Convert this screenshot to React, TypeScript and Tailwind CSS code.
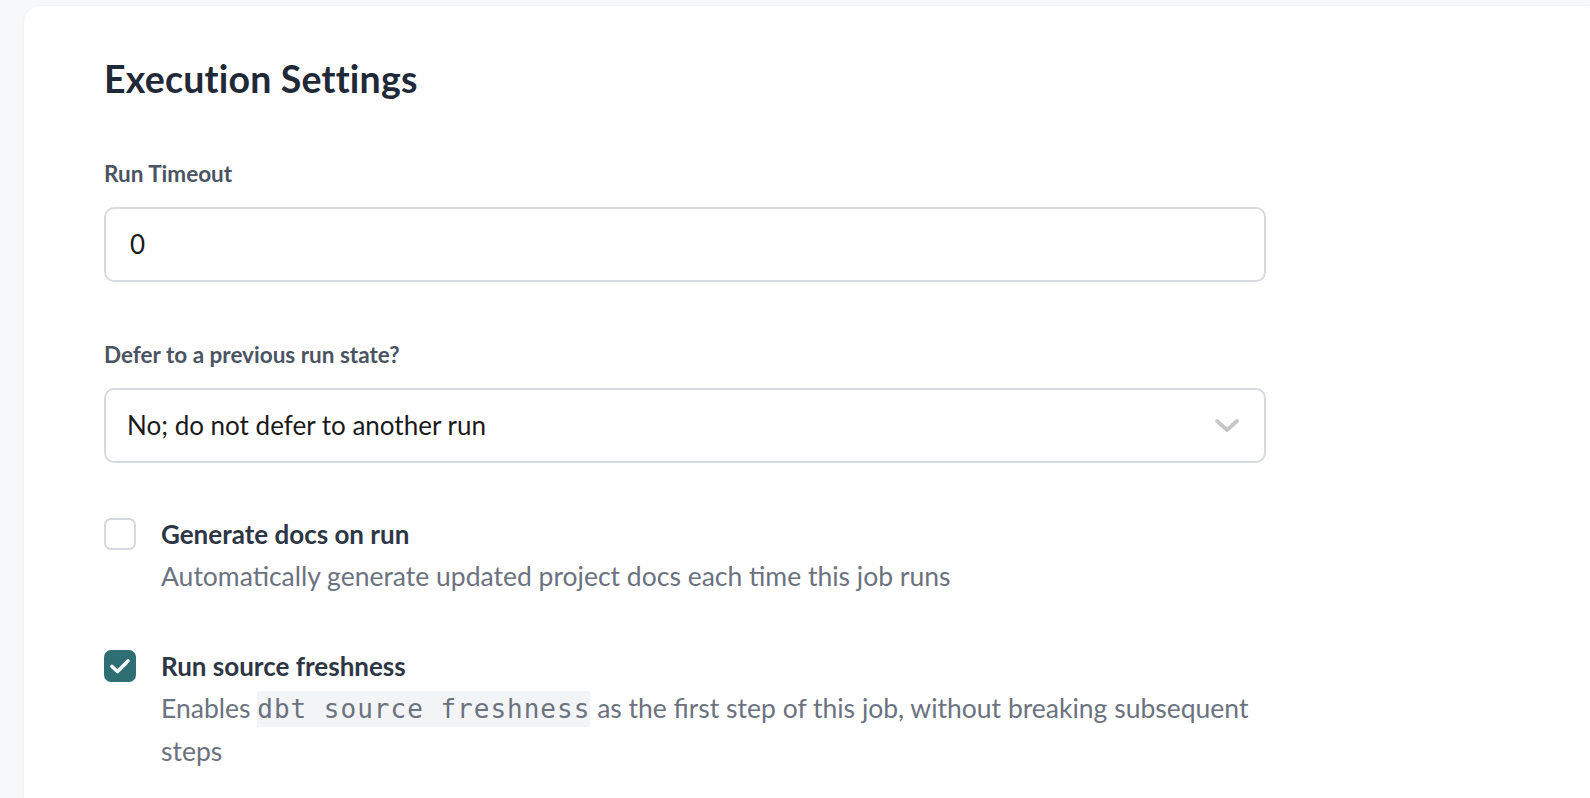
import React from "react";

const FieldLabel = ({ children }: { children: React.ReactNode }) => (
  <div className="text-[22.5px] leading-[26px] font-bold text-[#4a5463]">{children}</div>
);

interface CheckRowProps {
  checked: boolean;
  title: string;
  children: React.ReactNode;
}

const CheckRow = ({ checked, title, children }: CheckRowProps) => (
  <div className="flex gap-[25px]">
    <div className="pt-[5px] shrink-0">
      {checked ? (
        <div className="w-[32px] h-[32px] rounded-[7px] bg-[#2f6e72]">
          <svg width="32" height="32" viewBox="0 0 32 32" fill="none">
            <path d="M8 16.5l5.5 5L24 11" stroke="white" strokeWidth="3.6" strokeLinecap="round" strokeLinejoin="round" />
          </svg>
        </div>
      ) : (
        <div className="w-[32px] h-[32px] rounded-[7px] border-2 border-[#d5d9df] bg-white" />
      )}
    </div>
    <div className="flex-1">
      <div className="text-[26px] leading-[42px] font-bold text-[#2d3645]">{title}</div>
      <div className="text-[26.5px] leading-[42px] text-[#6b7280]">{children}</div>
    </div>
  </div>
);

export default function App() {
  return (
    <div className="min-h-screen bg-[#f7f8fa] pt-[6px] pl-[24px] font-['Lato',sans-serif]">
      <div className="bg-white rounded-tl-[16px] shadow-[0_0_2px_rgba(0,0,0,0.06)] min-h-[792px] pl-[80px] pt-[51px]">
        <div className="w-[1162px]">
          <h1 className="text-[37.5px] leading-[44px] font-bold text-[#1f2937] tracking-[0.2px]">Execution Settings</h1>

          <div className="mt-[60px]">
            <FieldLabel>Run Timeout</FieldLabel>
            <div className="mt-[20px] h-[75px] rounded-[10px] border-2 border-[#d7dbe0] flex items-center px-[24px] text-[26px] text-[#1a1a1a]">
              0
            </div>
          </div>

          <div className="mt-[60px]">
            <FieldLabel>Defer to a previous run state?</FieldLabel>
            <div className="mt-[20px] h-[75px] rounded-[10px] border-2 border-[#d7dbe0] flex items-center justify-between pl-[21px] pr-[24px] text-[26px] text-[#1a1a1a]">
              <span>No; do not defer to another run</span>
              <svg width="26" height="16" viewBox="0 0 26 16" fill="none">
                <path d="M3 3l10 9 10-9" stroke="#c6c6c6" strokeWidth="3.8" strokeLinecap="round" strokeLinejoin="round" />
              </svg>
            </div>
          </div>

          <div className="mt-[50px]">
            <CheckRow checked={false} title="Generate docs on run">
              Automatically generate updated project docs each time this job runs
            </CheckRow>
          </div>

          <div className="mt-[48px]">
            <CheckRow checked={true} title="Run source freshness">
              Enables{" "}
              <code className="font-['DejaVu_Sans_Mono',monospace] text-[26px] tracking-[1px] bg-[#f3f4f6] py-[3px] text-[#6b7280]">
                dbt source freshness
              </code>{" "}
              as the first step of this job, without breaking subsequent steps
            </CheckRow>
          </div>
        </div>
      </div>
    </div>
  );
}
